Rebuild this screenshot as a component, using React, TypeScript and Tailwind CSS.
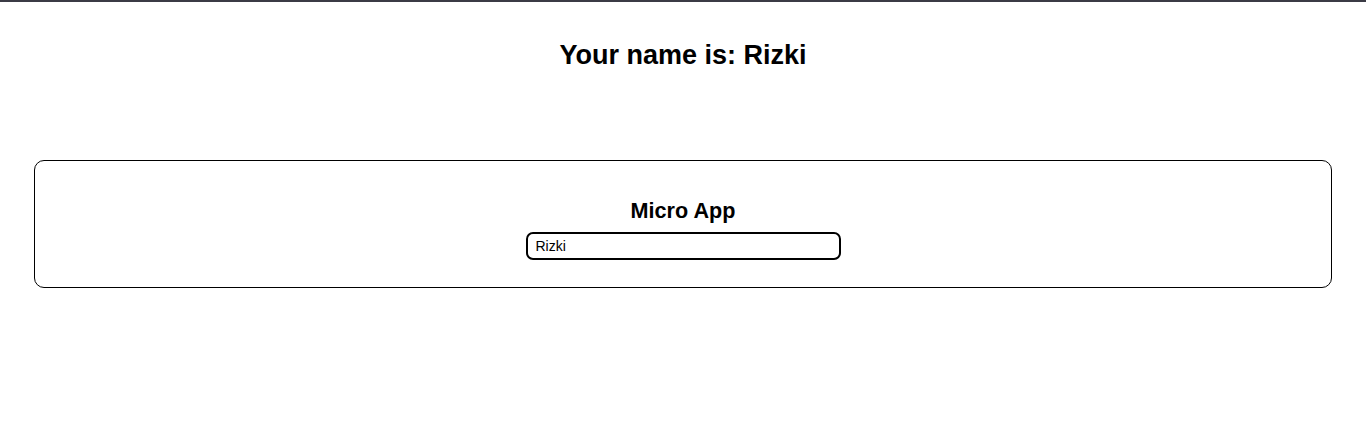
export default function App() {
  return (
    <div
      className="min-h-[438px] bg-white border-t-2 border-[#3b3b45] text-black"
      style={{ fontFamily: '"Liberation Sans", Arial, sans-serif' }}
    >
      <div className="pt-[38px] flex justify-center">
        <h2 className="text-[27px] leading-[31px] font-bold">Your name is: Rizki</h2>
      </div>
      <div className="mt-[89px] mx-[34px] border border-black rounded-[10px] flex flex-col items-center pt-[37px] pb-[27px]">
        <h3 className="text-[21.6px] leading-[25px] font-bold">Micro App</h3>
        <input
          readOnly
          value="Rizki"
          className="mt-[9px] w-[315px] h-[28px] border-2 border-black rounded-[7px] px-[8px] text-[14px] outline-none"
          style={{ fontFamily: '"Liberation Sans", Arial, sans-serif' }}
        />
      </div>
    </div>
  );
}
